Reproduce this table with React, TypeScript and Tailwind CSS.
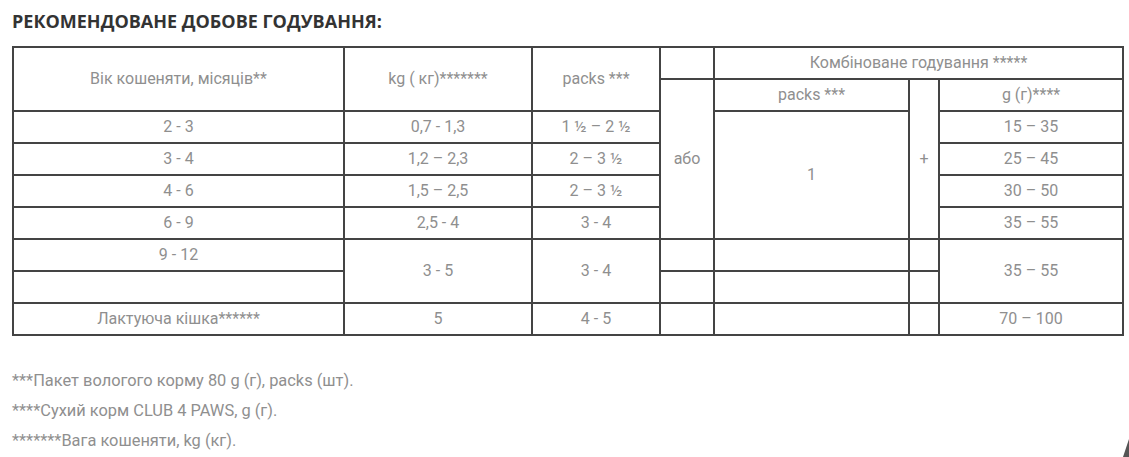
import React from "react";

const cell = "border-2 border-[#444] text-center align-middle p-0 h-[32px]";

const rows = [
	{ age: "2 - 3", kg: "0,7 - 1,3", packs: "1 ½ – 2 ½", g: "15 – 35" },
	{ age: "3 - 4", kg: "1,2 – 2,3", packs: "2 – 3 ½", g: "25 – 45" },
	{ age: "4 - 6", kg: "1,5 – 2,5", packs: "2 – 3 ½", g: "30 – 50" },
	{ age: "6 - 9", kg: "2,5 - 4", packs: "3 - 4", g: "35 – 55" },
];

export default function App() {
	return (
		<div className="relative w-[1129px] h-[457px] overflow-hidden bg-white font-['Roboto',sans-serif] text-[#8f8f8f]">
			<div className="pl-[12px] pt-[10px]">
				<h2 className="font-['Open_Sans',sans-serif] text-[18px] leading-[22px] font-bold text-[#333]">
					РЕКОМЕНДОВАНЕ ДОБОВЕ ГОДУВАННЯ:
				</h2>
				<table className="mt-[14px] w-[1110px] table-fixed border-collapse text-[16px]">
					<colgroup>
						<col className="w-[331px]" />
						<col className="w-[188px]" />
						<col className="w-[128px]" />
						<col className="w-[54px]" />
						<col className="w-[195px]" />
						<col className="w-[30px]" />
						<col className="w-[184px]" />
					</colgroup>
					<tbody>
						<tr>
							<td rowSpan={2} className={cell}>
								Вік кошеняти, місяців**
							</td>
							<td rowSpan={2} className={cell}>
								kg ( кг)*******
							</td>
							<td rowSpan={2} className={cell}>
								packs ***
							</td>
							<td className={cell} />
							<td colSpan={3} className={cell}>
								Комбіноване годування *****
							</td>
						</tr>
						<tr>
							<td rowSpan={5} className={cell}>
								або
							</td>
							<td className={cell}>packs ***</td>
							<td rowSpan={5} className={cell}>
								+
							</td>
							<td className={cell}>g (г)****</td>
						</tr>
						{rows.map((r, i) => (
							<tr key={r.age}>
								<td className={cell}>{r.age}</td>
								<td className={cell}>{r.kg}</td>
								<td className={cell}>{r.packs}</td>
								{i === 0 && (
									<td rowSpan={4} className={cell}>
										1
									</td>
								)}
								<td className={cell}>{r.g}</td>
							</tr>
						))}
						<tr>
							<td className={cell}>9 - 12</td>
							<td rowSpan={2} className={cell}>
								3 - 5
							</td>
							<td rowSpan={2} className={cell}>
								3 - 4
							</td>
							<td className={cell} />
							<td className={cell} />
							<td className={cell} />
							<td rowSpan={2} className={cell}>
								35 – 55
							</td>
						</tr>
						<tr>
							<td className={cell} />
							<td className={cell} />
							<td className={cell} />
							<td className={cell} />
						</tr>
						<tr>
							<td className={cell}>Лактуюча кішка******</td>
							<td className={cell}>5</td>
							<td className={cell}>4 - 5</td>
							<td className={cell} />
							<td className={cell} />
							<td className={cell} />
							<td className={cell}>70 – 100</td>
						</tr>
					</tbody>
				</table>
				<div className="mt-[34px] flex flex-col gap-[9px] text-[16.4px] leading-[21px]">
					<p>***Пакет вологого корму 80 g (г), packs (шт).</p>
					<p>****Сухий корм CLUB 4 PAWS, g (г).</p>
					<p>*******Вага кошеняти, kg (кг).</p>
				</div>
			</div>
			<svg
				className="absolute right-0 bottom-0"
				width="8"
				height="20"
				viewBox="0 0 8 20"
			>
				<polygon points="8,2 8,20 2,20" fill="#555" />
			</svg>
		</div>
	);
}
